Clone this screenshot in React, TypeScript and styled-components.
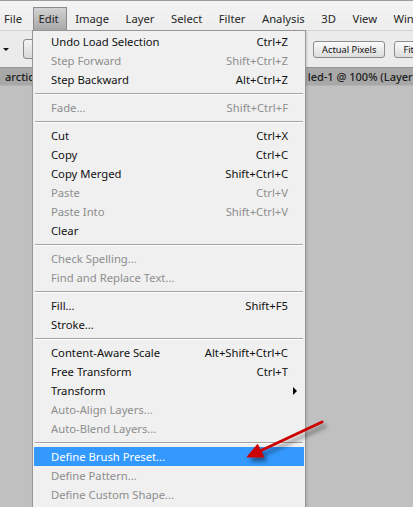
import React from "react";
import styled, { createGlobalStyle, css } from "styled-components";

const Global = createGlobalStyle`
  html, body { margin: 0; padding: 0; }
  body {
    width: 413px;
    height: 507px;
    overflow: hidden;
    background: #c0c0c0;
    font-family: "Noto Sans", "Open Sans", sans-serif;
  }
`;

const Window = styled.div`
  position: relative;
  width: 413px;
  height: 507px;
  display: flex;
  flex-direction: column;
  overflow: hidden;
`;

const MenuBar = styled.div`
  height: 30px;
  box-sizing: border-box;
  display: flex;
  align-items: flex-start;
  padding: 6px 0 0 0;
  gap: 2.5px;
  background: linear-gradient(#f4f4f4, #ededed);
  border-top: 1px solid #9c9c9c;
  flex-shrink: 0;
`;

const MenuTitle = styled.div<{ $active?: boolean }>`
  height: 24px;
  box-sizing: border-box;
  padding: 0 7px 2px 5px;
  display: flex;
  align-items: center;
  font-size: 11.25px;
  color: #262626;
  border: 1px solid transparent;
  border-bottom: none;
  white-space: nowrap;
  flex-shrink: 0;
  &:first-child { margin-left: -2px; }
  ${(p) =>
    p.$active &&
    css`
      border-color: #8b8b8b;
      background: linear-gradient(#d2d2d2, #a6a6a6);
      color: #1a1a1a;
    `}
`;

const Toolbar = styled.div`
  height: 37px;
  box-sizing: border-box;
  display: flex;
  align-items: center;
  background: #ebebeb;
  border-top: 1px solid #d2d2d2;
  flex-shrink: 0;
  overflow: hidden;
`;

const Caret = styled.div`
  margin-left: 3px;
  width: 0;
  height: 0;
  border-left: 3px solid transparent;
  border-right: 3px solid transparent;
  border-top: 3px solid #111;
`;

const ToolSep = styled.div`
  align-self: stretch;
  margin: 2px 0 0 8px;
  width: 1px;
  background: #c4c4c4;
  box-shadow: 1px 0 0 #fafafa;
`;

const IconButton = styled.div`
  margin-left: 6px;
  width: 18px;
  height: 18px;
  border: 1px solid #8a8a8a;
  border-radius: 3px;
  background: linear-gradient(#f4f4f4, #d8d8d8);
  flex-shrink: 0;
`;

const ButtonGroup = styled.div`
  margin-left: 270px;
  display: flex;
  gap: 9px;
  flex-shrink: 0;
`;

const ToolButton = styled.div`
  height: 17px;
  box-sizing: border-box;
  padding: 0 8px;
  display: flex;
  align-items: center;
  border: 1px solid #8c8c8c;
  border-radius: 3px;
  background: linear-gradient(#fbfbfb, #dcdcdc);
  font-size: 9.3px;
  color: #111;
  white-space: nowrap;
  flex-shrink: 0;
`;

const TabBar = styled.div`
  height: 19px;
  box-sizing: border-box;
  display: flex;
  align-items: center;
  background: #a8a8a8;
  border-top: 1px solid #959595;
  border-bottom: 1px solid #b4b4b4;
  flex-shrink: 0;
  overflow: hidden;
`;

const TabLabel = styled.div<{ $offset: number }>`
  margin-left: ${(p) => p.$offset}px;
  font-size: 11px;
  font-weight: 500;
  color: #1c1c1c;
  white-space: nowrap;
  flex-shrink: 0;
`;

const Canvas = styled.div`
  flex: 1;
  background: #c0c0c0;
`;

const Dropdown = styled.div`
  position: absolute;
  left: 32px;
  top: 30px;
  width: 274px;
  height: 490px;
  box-sizing: border-box;
  padding: 1px 1px 0 1px;
  background: #f0f0f0;
  border: 1px solid #979797;
  box-shadow: 1px 1px 2px rgba(0, 0, 0, 0.15);
  display: flex;
  flex-direction: column;
`;

const Item = styled.div<{ $disabled?: boolean; $hover?: boolean }>`
  height: 19px;
  flex-shrink: 0;
  display: grid;
  grid-template-columns: 1fr auto 16px;
  align-items: center;
  padding-left: 17px;
  font-size: 11.25px;
  color: ${(p) => (p.$disabled ? "#8e8e8e" : "#111")};
  white-space: nowrap;
  ${(p) =>
    p.$hover &&
    css`
      background: #3399ff;
      color: #fff;
    `}
`;

const Shortcut = styled.span``;

const SubArrow = styled.span`
  justify-self: start;
  margin-left: 5px;
  width: 0;
  height: 0;
  border-left: 4px solid #000;
  border-top: 4px solid transparent;
  border-bottom: 4px solid transparent;
`;

const Separator = styled.div`
  height: 9px;
  flex-shrink: 0;
  box-sizing: border-box;
  padding: 4px 1px 0 1px;
  &::before {
    content: "";
    display: block;
    height: 1px;
    background: #a3a3a3;
    box-shadow: 0 1px 0 #ffffff;
  }
`;

const Arrow = styled.svg`
  position: absolute;
  left: 240px;
  top: 415px;
  width: 95px;
  height: 55px;
  overflow: visible;
  pointer-events: none;
`;

type Entry =
  | { sep: true }
  | { label: string; key?: string; disabled?: boolean; hover?: boolean; sub?: boolean };

const entries: Entry[] = [
  { label: "Undo Load Selection", key: "Ctrl+Z" },
  { label: "Step Forward", key: "Shift+Ctrl+Z", disabled: true },
  { label: "Step Backward", key: "Alt+Ctrl+Z" },
  { sep: true },
  { label: "Fade...", key: "Shift+Ctrl+F", disabled: true },
  { sep: true },
  { label: "Cut", key: "Ctrl+X" },
  { label: "Copy", key: "Ctrl+C" },
  { label: "Copy Merged", key: "Shift+Ctrl+C" },
  { label: "Paste", key: "Ctrl+V", disabled: true },
  { label: "Paste Into", key: "Shift+Ctrl+V", disabled: true },
  { label: "Clear" },
  { sep: true },
  { label: "Check Spelling...", disabled: true },
  { label: "Find and Replace Text...", disabled: true },
  { sep: true },
  { label: "Fill...", key: "Shift+F5" },
  { label: "Stroke..." },
  { sep: true },
  { label: "Content-Aware Scale", key: "Alt+Shift+Ctrl+C" },
  { label: "Free Transform", key: "Ctrl+T" },
  { label: "Transform", sub: true },
  { label: "Auto-Align Layers...", disabled: true },
  { label: "Auto-Blend Layers...", disabled: true },
  { sep: true },
  { label: "Define Brush Preset...", hover: true },
  { label: "Define Pattern...", disabled: true },
  { label: "Define Custom Shape...", disabled: true },
  { sep: true },
];

const menus = ["File", "Edit", "Image", "Layer", "Select", "Filter", "Analysis", "3D", "View", "Window"];

export default function App() {
  return (
    <Window>
      <Global />
      <MenuBar>
        {menus.map((m) => (
          <MenuTitle key={m} $active={m === "Edit"}>
            {m}
          </MenuTitle>
        ))}
      </MenuBar>
      <Toolbar>
        <Caret />
        <ToolSep />
        <IconButton />
        <ButtonGroup>
          <ToolButton>Actual Pixels</ToolButton>
          <ToolButton>Fit Screen</ToolButton>
        </ButtonGroup>
      </Toolbar>
      <TabBar>
        <TabLabel $offset={5}>arctic</TabLabel>
        <TabLabel $offset={274}>led-1 @ 100% (Layer</TabLabel>
      </TabBar>
      <Canvas />
      <Dropdown>
        {entries.map((e, i) =>
          "sep" in e ? (
            <Separator key={i} />
          ) : (
            <Item key={i} $disabled={e.disabled} $hover={e.hover}>
              <span>{e.label}</span>
              <Shortcut>{e.key ?? ""}</Shortcut>
              {e.sub ? <SubArrow /> : <span />}
            </Item>
          )
        )}
      </Dropdown>
      <Arrow viewBox="0 0 95 55">
        <defs>
          <filter id="shadow" x="-30%" y="-30%" width="160%" height="160%">
            <feDropShadow dx="3" dy="4" stdDeviation="2" floodColor="#000" floodOpacity="0.45" />
          </filter>
        </defs>
        <g filter="url(#shadow)" fill="#cc0000" stroke="#cc0000">
          <line x1="82" y1="7" x2="19" y2="36.5" strokeWidth="3" strokeLinecap="round" />
          <polygon points="7,42 17.6,29.4 23.6,42" strokeWidth="1" strokeLinejoin="round" />
        </g>
      </Arrow>
    </Window>
  );
}
